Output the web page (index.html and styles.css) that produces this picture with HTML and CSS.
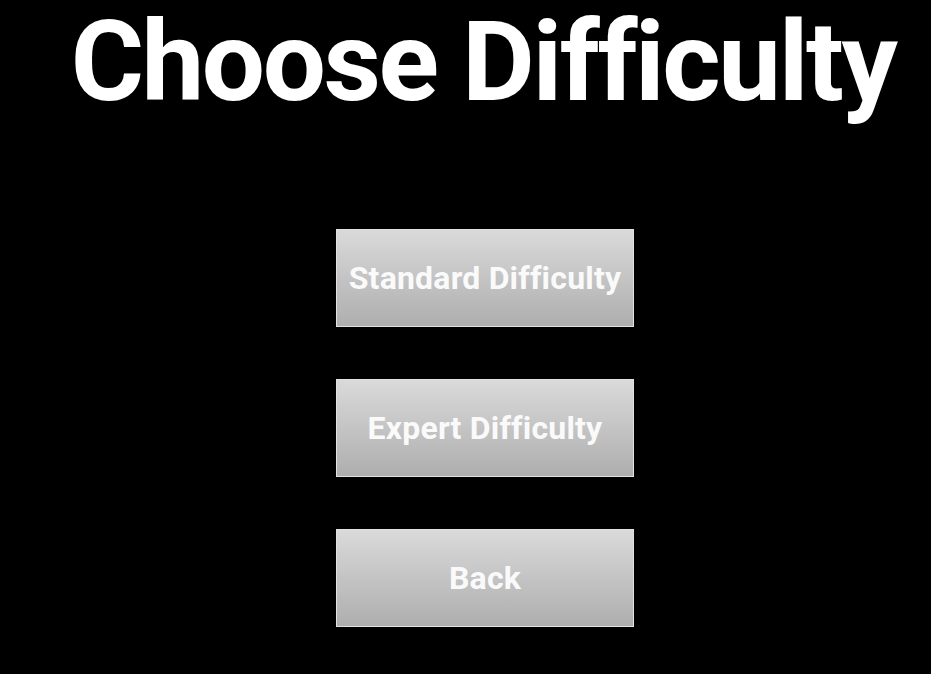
FILE: index.html
```html
<!DOCTYPE html>
<html>
<head>
<meta charset="utf-8">
<link rel="stylesheet" href="styles.css">
</head>
<body>
<div class="screen">
  <h1 class="title">Choose Difficulty</h1>
  <div class="buttons">
    <button class="btn">Standard Difficulty</button>
    <button class="btn">Expert Difficulty</button>
    <button class="btn">Back</button>
  </div>
</div>
</body>
</html>
```
FILE: styles.css
```css
html, body {
  margin: 0;
  padding: 0;
  background: #000;
}
.screen {
  width: 931px;
  height: 674px;
  overflow: hidden;
  display: flex;
  flex-direction: column;
  align-items: center;
  font-family: Roboto, "Liberation Sans", sans-serif;
  font-variant-ligatures: none;
}
.title {
  margin: 0;
  padding-left: 35px;
  padding-top: 4px;
  height: 229px;
  box-sizing: border-box;
  font-size: 112px;
  font-weight: 700;
  letter-spacing: -2.4px;
  color: #fff;
  line-height: 116px;
  white-space: nowrap;
  font-variant-ligatures: none;
}
.buttons {
  display: flex;
  flex-direction: column;
  gap: 52px;
  margin-left: 39px;
}
.btn {
  width: 298px;
  height: 98px;
  box-sizing: border-box;
  border: 1px solid #e2e2e2;
  background: linear-gradient(to bottom, #dadada, #aeaeae);
  color: #fafafa;
  font-family: Roboto, "Liberation Sans", sans-serif;
  font-variant-ligatures: none;
  font-weight: 700;
  font-size: 32px;
  letter-spacing: 0.2px;
  padding: 0;
  margin: 0;
  white-space: nowrap;
}
```
